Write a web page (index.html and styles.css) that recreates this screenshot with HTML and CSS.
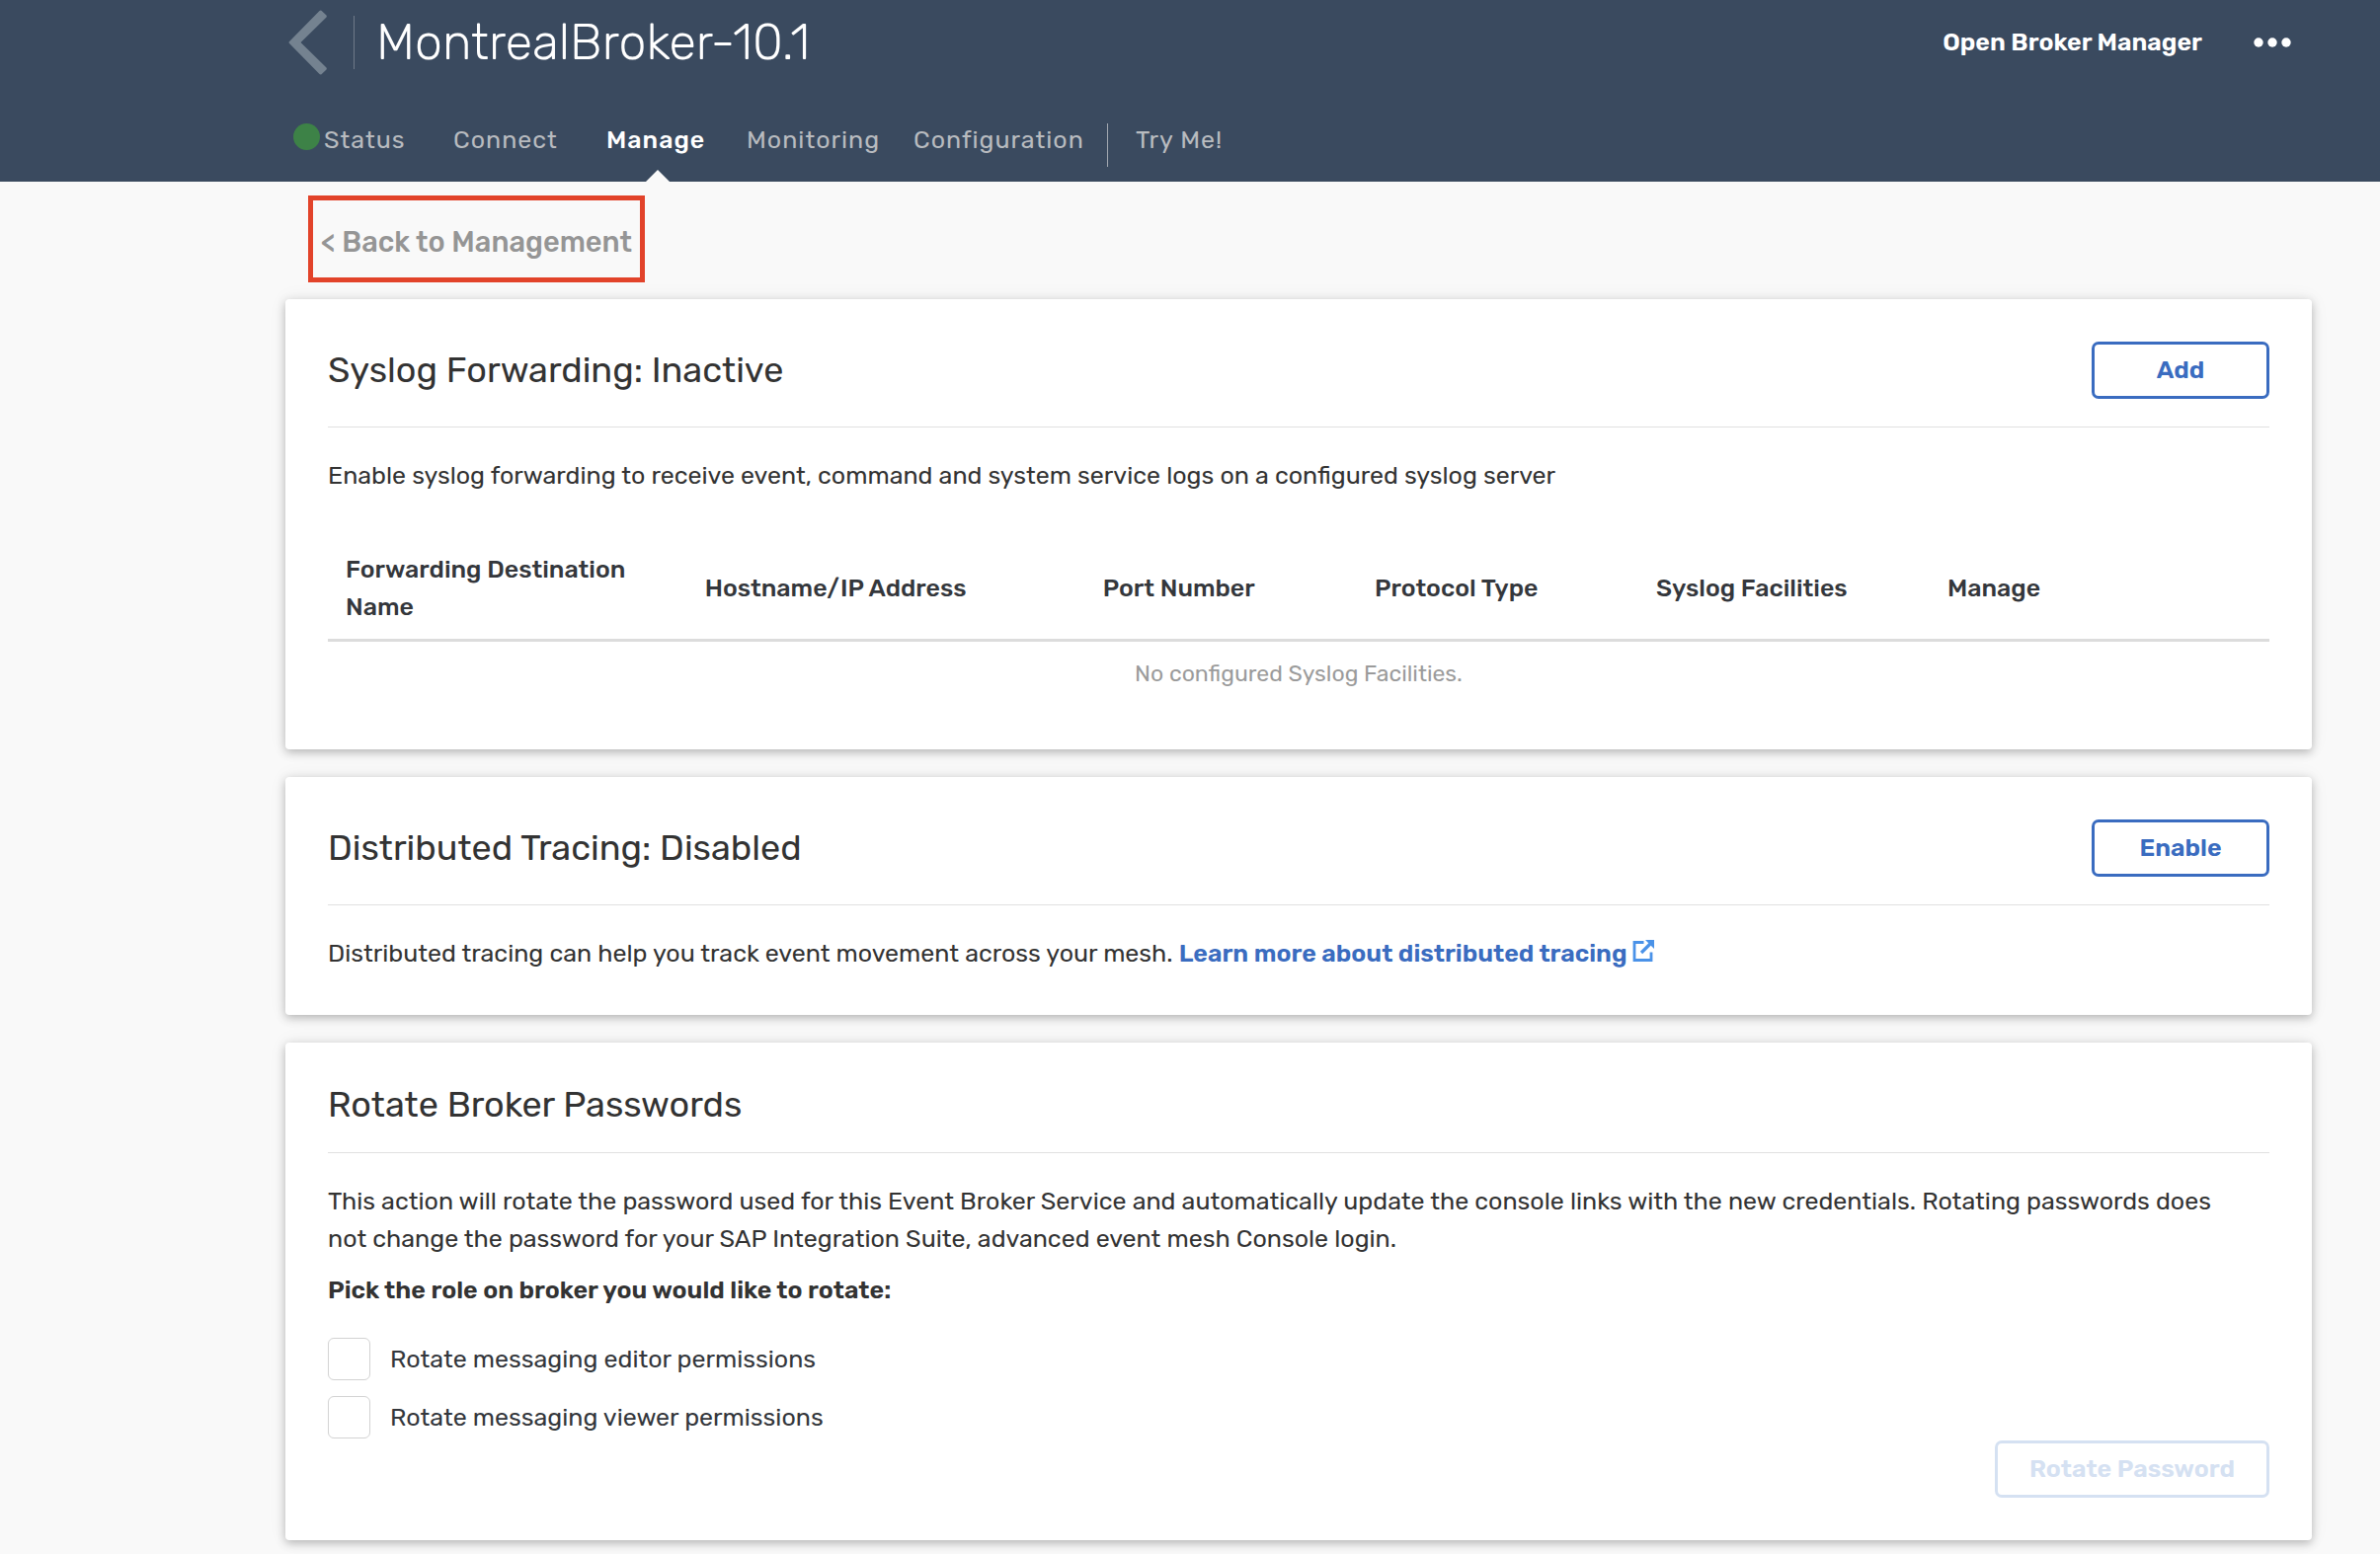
FILE: index.html
```html
<!DOCTYPE html>
<html lang="en">
<head>
<meta charset="utf-8">
<meta name="viewport" content="width=device-width, initial-scale=1">
<title>MontrealBroker-10.1 - Manage</title>
<link rel="stylesheet" href="styles.css">
</head>
<body>
<header class="header">
  <div class="header-top">
    <a class="header-back" href="#" aria-label="Back to services">
      <svg width="40" height="66" viewBox="0 0 40 66" aria-hidden="true"><path d="M33.500 0.800 L38.500 5.600 Q39.300 6.500 38.500 7.500 L12.500 33 L38.500 58.500 Q39.300 59.500 38.500 60.400 L33.500 65.200 Q32.500 65.800 31.500 65.100 L0.800 33.800 Q0.200 33 0.800 32.200 L31.500 0.900 Q32.500 0.200 33.500 0.800Z" fill="#748290"/></svg>
    </a>
    <h1 class="header-title">MontrealBroker-10.1</h1>
    <a class="header-action" href="#">Open Broker Manager</a>
    <button class="more" type="button" aria-label="More actions">
      <svg width="38" height="10" viewBox="0 0 38 10" aria-hidden="true"><g fill="#fff"><circle cx="5" cy="5" r="4.700"/><circle cx="19" cy="5" r="4.700"/><circle cx="33" cy="5" r="4.700"/></g></svg>
    </button>
  </div>
  <nav class="tabs" aria-label="Service">
    <a class="tab" href="#"><span class="status-dot"></span>Status</a>
    <a class="tab" href="#">Connect</a>
    <a class="tab tab-active" href="#" aria-current="page">Manage</a>
    <a class="tab" href="#">Monitoring</a>
    <a class="tab" href="#">Configuration</a>
    <a class="tab tab-divided" href="#">Try Me!</a>
  </nav>
</header>

<main class="content">
  <a class="back-link" href="#">&lt; Back to Management</a>

  <section class="card">
    <div class="card-head">
      <h2 class="card-title">Syslog Forwarding: Inactive</h2>
      <button class="button" type="button">Add</button>
    </div>
    <p class="text">Enable syslog forwarding to receive event, command and system service logs on a configured syslog server</p>
    <table class="table">
      <thead>
        <tr>
          <th class="col-name" scope="col">Forwarding Destination Name</th>
          <th class="col-host" scope="col">Hostname/IP Address</th>
          <th class="col-port" scope="col">Port Number</th>
          <th class="col-protocol" scope="col">Protocol Type</th>
          <th class="col-facilities" scope="col">Syslog Facilities</th>
          <th scope="col">Manage</th>
        </tr>
      </thead>
      <tbody>
        <tr><td colspan="6">No configured Syslog Facilities.</td></tr>
      </tbody>
    </table>
  </section>

  <section class="card">
    <div class="card-head">
      <h2 class="card-title">Distributed Tracing: Disabled</h2>
      <button class="button" type="button">Enable</button>
    </div>
    <p class="text">Distributed tracing can help you track event movement across your mesh. <a class="link" href="#">Learn more about distributed tracing <svg class="link-icon" width="22" height="22" viewBox="0 0 22 22" aria-hidden="true"><path d="M11.500 2.500H2v18h17V12.500" fill="none" stroke="#4a92e8" stroke-width="2.800"/><path d="M9 13L18 4" fill="none" stroke="#4a92e8" stroke-width="3.200"/><path d="M13 0H22V9Z" fill="#4a92e8"/></svg></a></p>
  </section>

  <section class="card">
    <div class="card-head">
      <h2 class="card-title">Rotate Broker Passwords</h2>
    </div>
    <p class="text">This action will rotate the password used for this Event Broker Service and automatically update the console links with the new credentials. Rotating passwords does not change the password for your SAP Integration Suite, advanced event mesh Console login.</p>
    <form class="rotate">
      <fieldset class="roles">
        <legend class="roles-title">Pick the role on broker you would like to rotate:</legend>
        <label class="check"><input class="check-box" type="checkbox" name="editor">Rotate messaging editor permissions</label>
        <label class="check"><input class="check-box" type="checkbox" name="viewer">Rotate messaging viewer permissions</label>
      </fieldset>
      <button class="button" type="submit" disabled>Rotate Password</button>
    </form>
  </section>
</main>
</body>
</html>
```

FILE: styles.css
```css
* {
  box-sizing: border-box;
}

body {
  margin: 0;
  background: #f9f9f9;
  color: #333;
  font-family: Rubik, Roboto, "Liberation Sans", sans-serif;
  font-size: 25px;
  line-height: 38px;
}

a {
  color: inherit;
  text-decoration: none;
}

h1,
h2,
p {
  margin: 0;
}

svg {
  display: block;
}

/* Header */

.header {
  padding: 0 90px 0 292px;
  background: #3a4a5f;
  color: #fff;
}

.header-top {
  display: flex;
  align-items: center;
  height: 86px;
}

.header-title {
  flex: 1;
  margin-left: 26px;
  padding-left: 22px;
  border-left: 1px solid #6e7a88;
  font-size: 50px;
  font-weight: 300;
  line-height: 54px;
}

.header-action {
  font-weight: 600;
}

.more {
  margin-left: 52px;
  padding: 8px 0;
  border: 0;
  background: none;
}

.tabs {
  display: grid;
  grid-template-columns: 162px 155px 142px 169px 196px auto;
  justify-content: start;
  align-items: center;
  height: 98px;
  padding-left: 5px;
  color: #b8bbbf;
  letter-spacing: 1px;
}

.tab {
  position: relative;
  display: flex;
  align-items: center;
  justify-self: start;
  height: 98px;
  padding-top: 14px;
  white-space: nowrap;
}

.status-dot {
  width: 27px;
  height: 27px;
  margin: 0 4px 8px 0;
  border-radius: 50%;
  background: #3d8247;
}

.tab-active {
  padding-right: 4px;
  color: #fff;
  font-weight: 500;
}

.tab-active::after {
  content: "";
  position: absolute;
  bottom: 0;
  left: 50%;
  border: 12px solid transparent;
  border-top: 0;
  border-bottom-color: #f9f9f9;
  transform: translateX(-50%);
}

.tab-divided {
  height: 44px;
  margin-top: 24px;
  padding: 0 0 10px 28px;
  border-left: 1px solid #a3a9b1;
}

/* Content */

.content {
  display: flex;
  flex-direction: column;
  gap: 28px;
  padding: 14px 69px 14px 289px;
}

.back-link {
  align-self: flex-start;
  margin: 0 0 -11px 23px;
  padding: 23px 8px 17px;
  border: 5px solid #e2432a;
  color: #959595;
  font-size: 29px;
  font-weight: 500;
}

.card {
  padding: 43px;
  border-radius: 4px;
  background: #fff;
  box-shadow: 0 3px 10px rgba(0, 0, 0, 0.25), 0 0 20px rgba(0, 0, 0, 0.06);
}

.card-head {
  display: flex;
  align-items: center;
  justify-content: space-between;
  margin-bottom: 30px;
  padding-bottom: 28px;
  border-bottom: 1px solid #e1e1e1;
}

.card-title {
  font-size: 36px;
  font-weight: 400;
  line-height: 40px;
}

.text {
  padding-right: 24px;
}

.button {
  min-width: 180px;
  height: 58px;
  padding: 0 32px;
  border: 3px solid #3a6cc0;
  border-radius: 7px;
  background: #fff;
  color: #3a6cc0;
  font: inherit;
  font-weight: 600;
}

.button:disabled {
  border-color: #d5e1f2;
  color: #d5e1f2;
}

.link {
  color: #3a6cc0;
  font-weight: 600;
}

.link-icon {
  display: inline-block;
}

/* Syslog table */

.table {
  width: 100%;
  margin-top: 44px;
  border-collapse: collapse;
  table-layout: fixed;
}

.table th {
  padding: 13px 18px;
  border-bottom: 3px solid #dcdcdc;
  color: #34373c;
  font-weight: 500;
  text-align: left;
}

.table td {
  padding: 13px 0 15px;
  color: #9b9b9b;
  font-size: 23px;
  text-align: center;
}

.col-name {
  width: 18.5%;
}

.col-host {
  width: 20.5%;
}

.col-port {
  width: 14%;
}

.col-protocol {
  width: 14.5%;
}

.col-facilities {
  width: 15%;
}

/* Password rotation */

.rotate {
  display: flex;
  flex-direction: column;
  gap: 2px;
  margin-top: 14px;
}

.rotate .button {
  align-self: flex-end;
}

.roles {
  display: flex;
  flex-direction: column;
  gap: 16px;
  margin: 0;
  padding: 0;
  border: 0;
}

.roles-title {
  margin-bottom: 29px;
  padding: 0;
  font-weight: 600;
}

.check {
  display: flex;
  align-items: center;
  align-self: flex-start;
  gap: 20px;
  color: #34373c;
}

.check-box {
  appearance: none;
  width: 43px;
  height: 43px;
  margin: 0;
  border: 1px solid #d3d3d3;
  border-radius: 6px;
  background: #fff;
}

.check-box:checked {
  background: #3a6cc0;
}
```
